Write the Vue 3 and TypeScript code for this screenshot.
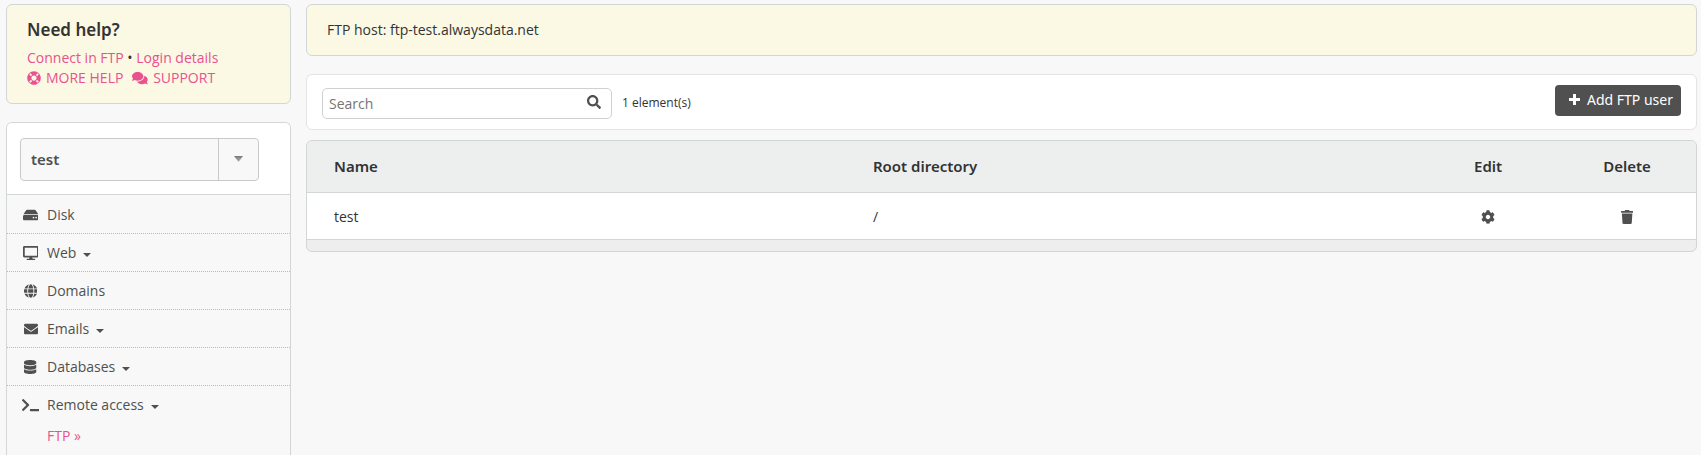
<script setup lang="ts">
import { ref } from 'vue'

interface Icon {
  box: string
  d: string
}

interface MenuEntry {
  label: string
  icon: Icon
  expandable: boolean
  children?: string[]
}

const icons: Record<string, Icon> = {
  disk: {
    box: '0 0 576 512',
    d: 'M576 304v96c0 26.51-21.49 48-48 48H48c-26.51 0-48-21.49-48-48v-96c0-26.51 21.49-48 48-48h480c26.51 0 48 21.49 48 48zm-48-80a79.557 79.557 0 0 1 30.777 6.165L462.25 85.374A48.003 48.003 0 0 0 422.311 64H153.689a48 48 0 0 0-39.938 21.374L17.223 230.165A79.557 79.557 0 0 1 48 224h480zm-48 96c-17.673 0-32 14.327-32 32s14.327 32 32 32 32-14.327 32-32-14.327-32-32-32zm-96 0c-17.673 0-32 14.327-32 32s14.327 32 32 32 32-14.327 32-32-14.327-32-32-32z',
  },
  desktop: {
    box: '0 0 576 512',
    d: 'M528 0H48C21.5 0 0 21.5 0 48v320c0 26.5 21.5 48 48 48h192l-16 48h-72c-13.3 0-24 10.7-24 24s10.7 24 24 24h272c13.3 0 24-10.7 24-24s-10.7-24-24-24h-72l-16-48h192c26.5 0 48-21.5 48-48V48c0-26.5-21.5-48-48-48zm-16 352H64V64h448v288z',
  },
  globe: {
    box: '0 0 496 512',
    d: 'M336.5 160C322 70.7 287.8 8 248 8s-74 62.7-88.5 152h177zM152 256c0 22.2 1.2 43.5 3.3 64h185.3c2.1-20.5 3.3-41.8 3.3-64s-1.2-43.5-3.3-64H155.3c-2.1 20.5-3.3 41.8-3.3 64zm324.7-96c-28.6-67.9-86.5-120.4-158-141.6 24.4 33.8 41.2 84.7 50 141.6h108zM177.2 18.4C105.8 39.6 47.8 92.1 19.3 160h108c8.7-56.9 25.5-107.8 49.9-141.6zM487.4 192H372.7c2.1 21 3.3 42.5 3.3 64s-1.2 43-3.3 64h114.6c5.5-20.5 8.6-41.8 8.6-64s-3.1-43.5-8.5-64zM120 256c0-21.5 1.2-43 3.3-64H8.6C3.2 212.5 0 233.8 0 256s3.2 43.5 8.6 64h114.6c-2-21-3.2-42.5-3.2-64zm39.5 96c14.5 89.3 48.7 152 88.5 152s74-62.7 88.5-152h-177zm159.3 141.6c71.4-21.2 129.4-73.7 158-141.6h-108c-8.8 56.9-25.6 107.8-50 141.6zM19.3 352c28.6 67.9 86.5 120.4 158 141.6-24.4-33.8-41.2-84.7-50-141.6h-108z',
  },
  envelope: {
    box: '0 0 512 512',
    d: 'M502.3 190.8c3.9-3.1 9.7-.2 9.7 4.7V400c0 26.5-21.5 48-48 48H48c-26.5 0-48-21.5-48-48V195.6c0-5 5.7-7.8 9.7-4.7 22.4 17.4 52.1 39.5 154.1 113.6 21.1 15.4 56.7 47.8 92.2 47.6 35.7.3 72-32.8 92.3-47.6 102-74.1 131.6-96.3 154-113.7zM256 320c23.2.4 56.6-29.2 73.4-41.4 132.7-96.3 142.8-104.7 173.4-128.7 5.8-4.5 9.2-11.5 9.2-18.9v-19c0-26.5-21.5-48-48-48H48c-26.5 0-48 21.5-48 48v19c0 7.4 3.4 14.3 9.2 18.9 30.6 23.9 40.7 32.4 173.4 128.7 16.8 12.2 50.2 41.8 73.4 41.4z',
  },
  database: {
    box: '0 0 448 512',
    d: 'M448 73.143v45.714C448 159.143 347.667 192 224 192S0 159.143 0 118.857V73.143C0 32.857 100.333 0 224 0s224 32.857 224 73.143zM448 176v102.857C448 319.143 347.667 352 224 352S0 319.143 0 278.857V176c48.125 33.143 136.208 48.572 224 48.572S399.874 209.143 448 176zm0 160v102.857C448 479.143 347.667 512 224 512S0 479.143 0 438.857V336c48.125 33.143 136.208 48.572 224 48.572S399.874 369.143 448 336z',
  },
  terminal: {
    box: '0 0 640 512',
    d: 'M257.981 272.971L63.638 467.314c-9.373 9.373-24.569 9.373-33.941 0L7.029 444.647c-9.357-9.357-9.375-24.522-.04-33.901L161.011 256 6.99 101.255c-9.335-9.379-9.317-24.544.04-33.901l22.667-22.667c9.373-9.373 24.569-9.373 33.941 0L257.981 239.03c9.373 9.372 9.373 24.568 0 33.941zM640 456v-32c0-13.255-10.745-24-24-24H312c-13.255 0-24 10.745-24 24v32c0 13.255 10.745 24 24 24h304c13.255 0 24-10.745 24-24z',
  },
  lifeRing: {
    box: '0 0 512 512',
    d: 'M256 8C119.033 8 8 119.033 8 256s111.033 248 248 248 248-111.033 248-248S392.967 8 256 8zm173.696 119.559l-63.399 63.399c-10.987-18.559-26.67-34.252-45.255-45.255l63.399-63.399a218.396 218.396 0 0 1 45.255 45.255zM256 352c-53.019 0-96-42.981-96-96s42.981-96 96-96 96 42.981 96 96-42.981 96-96 96zM127.559 82.304l63.399 63.399c-18.559 10.987-34.252 26.67-45.255 45.255l-63.399-63.399a218.372 218.372 0 0 1 45.255-45.255zM82.304 384.441l63.399-63.399c10.987 18.559 26.67 34.252 45.255 45.255l-63.399 63.399a218.396 218.396 0 0 1-45.255-45.255zm302.137 45.255l-63.399-63.399c18.559-10.987 34.252-26.67 45.255-45.255l63.399 63.399a218.403 218.403 0 0 1-45.255 45.255z',
  },
  comments: {
    box: '0 0 576 512',
    d: 'M416 192c0-88.4-93.1-160-208-160S0 103.6 0 192c0 34.3 14.1 65.9 38 92-13.4 30.2-35.5 54.2-35.8 54.5-2.2 2.3-2.8 5.7-1.5 8.7S4.8 352 8 352c36.6 0 66.9-12.3 88.7-25 32.2 15.7 70.3 25 111.3 25 114.9 0 208-71.6 208-160zm122 220c23.9-26 38-57.7 38-92 0-66.9-53.5-124.2-129.3-148.1.9 6.6 1.3 13.3 1.3 20.1 0 105.9-107.7 192-240 192-10.8 0-21.3-.8-31.7-1.9C207.8 439.6 281.8 480 368 480c41 0 79.1-9.2 111.3-25 21.8 12.7 52.1 25 88.7 25 3.2 0 6.1-1.9 7.3-4.8 1.3-2.9.7-6.3-1.5-8.7-.3-.3-22.4-24.2-35.8-54.5z',
  },
  search: {
    box: '0 0 512 512',
    d: 'M505 442.7L405.3 343c-4.5-4.5-10.6-7-17-7H372c27.6-35.3 44-79.7 44-128C416 93.1 322.9 0 208 0S0 93.1 0 208s93.1 208 208 208c48.3 0 92.7-16.4 128-44v16.3c0 6.4 2.5 12.5 7 17l99.7 99.7c9.4 9.4 24.6 9.4 33.9 0l28.3-28.3c9.4-9.4 9.4-24.6.1-34zM208 336c-70.7 0-128-57.2-128-128 0-70.7 57.2-128 128-128 70.7 0 128 57.2 128 128 0 70.7-57.2 128-128 128z',
  },
  cog: {
    box: '0 0 512 512',
    d: 'M487.4 315.7l-42.6-24.6c4.3-23.2 4.3-47 0-70.2l42.6-24.6c4.9-2.8 7.1-8.6 5.5-14-11.1-35.6-30-67.8-54.7-94.6-3.8-4.1-10-5.1-14.8-2.3L380.8 110c-17.9-15.4-38.5-27.3-60.8-35.1V25.8c0-5.6-3.9-10.5-9.4-11.7-36.7-8.2-74.3-7.8-109.2 0-5.5 1.2-9.4 6.1-9.4 11.7V75c-22.2 7.9-42.8 19.8-60.8 35.1L88.7 85.5c-4.9-2.8-11-1.9-14.8 2.3-24.7 26.7-43.6 58.9-54.7 94.6-1.7 5.4.6 11.2 5.5 14L67.3 221c-4.3 23.2-4.3 47 0 70.2l-42.6 24.6c-4.9 2.8-7.1 8.6-5.5 14 11.1 35.6 30 67.8 54.7 94.6 3.8 4.1 10 5.1 14.8 2.3l42.6-24.6c17.9 15.4 38.5 27.3 60.8 35.1v49.2c0 5.6 3.9 10.5 9.4 11.7 36.7 8.2 74.3 7.8 109.2 0 5.5-1.2 9.4-6.1 9.4-11.7v-49.2c22.2-7.9 42.8-19.8 60.8-35.1l42.6 24.6c4.9 2.8 11 1.9 14.8-2.3 24.7-26.7 43.6-58.9 54.7-94.6 1.5-5.5-.7-11.3-5.6-14.1zM256 336c-44.1 0-80-35.9-80-80s35.9-80 80-80 80 35.9 80 80-35.9 80-80 80z',
  },
  trash: {
    box: '0 0 448 512',
    d: 'M432 32H312l-9.4-18.7A24 24 0 0 0 281.1 0H166.8a23.72 23.72 0 0 0-21.4 13.3L136 32H16A16 16 0 0 0 0 48v32a16 16 0 0 0 16 16h416a16 16 0 0 0 16-16V48a16 16 0 0 0-16-16zM53.2 467a48 48 0 0 0 47.9 45h245.8a48 48 0 0 0 47.9-45L416 128H32z',
  },
}

const menu: MenuEntry[] = [
  { label: 'Disk', icon: icons.disk, expandable: false },
  { label: 'Web', icon: icons.desktop, expandable: true },
  { label: 'Domains', icon: icons.globe, expandable: false },
  { label: 'Emails', icon: icons.envelope, expandable: true },
  { label: 'Databases', icon: icons.database, expandable: true },
  { label: 'Remote access', icon: icons.terminal, expandable: true, children: ['FTP »'] },
]

const users = [{ name: 'test', root: '/' }]
const account = ref('test')
const query = ref('')
</script>

<template>
  <div class="page">
    <aside class="sidebar">
      <section class="help">
        <h2>Need help?</h2>
        <p><a href="#">Connect in FTP</a> • <a href="#">Login details</a></p>
        <p class="help-actions">
          <a href="#"><svg class="icon" :viewBox="icons.lifeRing.box"><path :d="icons.lifeRing.d" /></svg>MORE HELP</a>
          <a href="#"><svg class="icon" :viewBox="icons.comments.box"><path :d="icons.comments.d" /></svg>SUPPORT</a>
        </p>
      </section>

      <nav class="nav">
        <div class="account">
          <div class="account-box">
            <select v-model="account" aria-label="Account">
              <option value="test">test</option>
            </select>
            <span class="account-arrow"></span>
          </div>
        </div>
        <ul class="menu">
          <li v-for="entry in menu" :key="entry.label">
            <a class="menu-link" href="#">
              <span class="menu-icon">
                <svg class="icon" :viewBox="entry.icon.box"><path :d="entry.icon.d" /></svg>
              </span>
              {{ entry.label }}
              <span v-if="entry.expandable" class="caret"></span>
            </a>
            <a v-for="child in entry.children" :key="child" class="submenu-link" href="#">{{ child }}</a>
          </li>
        </ul>
      </nav>
    </aside>

    <main class="content">
      <section class="notice">FTP host: ftp-test.alwaysdata.net</section>

      <section class="toolbar">
        <div class="filter">
          <div class="search">
            <input v-model="query" type="text" placeholder="Search" aria-label="Search" />
            <button type="button" aria-label="Run search">
              <svg class="icon" :viewBox="icons.search.box"><path :d="icons.search.d" /></svg>
            </button>
          </div>
          <span class="count">{{ users.length }} element(s)</span>
        </div>
        <button class="add" type="button">
          <svg class="plus" viewBox="0 0 11 11"><path d="M4 0h3v4h4v3H7v4H4V7H0V4h4z" /></svg>Add FTP user
        </button>
      </section>

      <div class="panel">
        <table>
          <thead>
            <tr>
              <th class="col-name">Name</th>
              <th>Root directory</th>
              <th class="col-action">Edit</th>
              <th class="col-action">Delete</th>
            </tr>
          </thead>
          <tbody>
            <tr v-for="user in users" :key="user.name">
              <td>{{ user.name }}</td>
              <td>{{ user.root }}</td>
              <td class="col-action">
                <a href="#" aria-label="Edit"><svg class="icon" :viewBox="icons.cog.box"><path :d="icons.cog.d" /></svg></a>
              </td>
              <td class="col-action">
                <a href="#" aria-label="Delete"><svg class="icon" :viewBox="icons.trash.box"><path :d="icons.trash.d" /></svg></a>
              </td>
            </tr>
          </tbody>
        </table>
      </div>
    </main>
  </div>
</template>

<style>
html {
  background: #f8f8f8;
}

body {
  margin: 0;
  overflow: hidden;
}
</style>

<style scoped>
* {
  box-sizing: border-box;
}

.page {
  display: grid;
  grid-template-columns: 285px minmax(0, 1fr);
  gap: 15px;
  min-height: 100vh;
  padding: 4px 4px 0 6px;
  color: #333;
  font: 14px/20px "Open Sans", "Noto Sans", sans-serif;
}

a {
  color: #e9528e;
  text-decoration: none;
}

button,
input,
select {
  margin: 0;
  font: inherit;
  color: inherit;
}

.icon {
  display: block;
  height: 14px;
  fill: currentColor;
}

.sidebar {
  display: flex;
  flex-direction: column;
  gap: 18px;
}

.help,
.notice {
  border: 1px solid #d3d6d6;
  border-radius: 6px;
  background: #fbf8e4;
}

.help {
  padding: 14px 20px 15px;
}

.help h2 {
  margin: 0 0 7px;
  font: 600 17px/22px "Noto Sans", sans-serif;
}

.help p {
  margin: 0;
}

.help .help-actions {
  display: flex;
  gap: 9px;
}

.help-actions a {
  display: flex;
  align-items: center;
  gap: 5px;
}

.nav {
  flex: 1;
  border: 1px solid #d3d6d6;
  border-bottom: 0;
  border-radius: 6px 6px 0 0;
  overflow: hidden;
}

.account {
  padding: 15px 31px 13px 13px;
  border-bottom: 1px solid #d3d6d6;
  background: #fff;
}

.account-box {
  display: flex;
  position: relative;
}

.account select {
  flex: 1;
  height: 43px;
  padding: 0 50px 2px 10px;
  border: 1px solid #c8caca;
  border-radius: 4px;
  appearance: none;
  background: #f8f8f8;
  color: #505050;
  font: 600 15px/20px "Noto Sans", sans-serif;
}

.account-arrow {
  position: absolute;
  top: 0;
  right: 0;
  bottom: 0;
  width: 41px;
  border-left: 1px solid #c8caca;
  pointer-events: none;
}

.account-arrow::after {
  content: "";
  display: block;
  width: 9px;
  height: 6px;
  margin: 18px 0 0 15px;
  background: linear-gradient(#77777c, #b8b8bc);
  clip-path: polygon(0 0, 100% 0, 50% 100%);
}

.menu {
  margin: 0;
  padding: 1px 0 0;
  list-style: none;
}

.menu li + li {
  border-top: 1px dotted #b8b8b8;
}

.menu-link {
  display: flex;
  align-items: center;
  height: 37px;
  padding-left: 14px;
  gap: 7px;
  color: #505050;
}

.menu-icon {
  display: flex;
  justify-content: center;
  width: 19px;
}

.caret {
  margin-top: 4px;
  border-top: 4px solid #505050;
  border-right: 4px solid transparent;
  border-left: 4px solid transparent;
}

.submenu-link {
  display: block;
  padding: 3px 0 16px 40px;
}

.notice {
  padding: 15px 20px;
}

.toolbar {
  display: flex;
  justify-content: space-between;
  margin: 18px 0 10px;
  padding: 10px 15px;
  border: 1px solid #e3e4e4;
  border-radius: 6px;
  background: #fff;
}

.filter {
  display: flex;
  align-items: center;
  gap: 10px;
  padding-top: 3px;
}

.search {
  display: flex;
  align-items: center;
  width: 290px;
  height: 31px;
  border: 1px solid #d0d0d0;
  border-radius: 5px;
  overflow: hidden;
}

.search input {
  flex: 1;
  min-width: 0;
  height: 29px;
  padding: 0 6px;
  border: 0;
  outline: 0;
  background: none;
}

.search input::placeholder {
  color: #757575;
  opacity: 1;
}

.search button {
  display: flex;
  align-items: center;
  height: 29px;
  padding: 0 10px 3px;
  border: 0;
  background: none;
  color: #505050;
}

.count {
  padding-bottom: 2px;
  font-size: 12px;
}

.add {
  display: flex;
  align-items: center;
  gap: 7px;
  height: 31px;
  padding: 0 8px 2px 14px;
  border: 0;
  border-radius: 4px;
  background: #505050;
  color: #fff;
  font-family: "Noto Sans", sans-serif;
}

.plus {
  width: 11px;
  height: 11px;
  fill: currentColor;
}

.panel {
  padding-bottom: 11px;
  border: 1px solid #d3d6d6;
  border-radius: 6px;
  overflow: hidden;
  background: #eee;
}

table {
  width: 100%;
  border-collapse: separate;
  border-spacing: 0;
  table-layout: fixed;
}

th,
td {
  padding: 0 27px;
  border-bottom: 1px solid #d3d6d6;
  text-align: left;
}

th {
  height: 52px;
  padding-bottom: 2px;
  background: #edefee;
  font: 600 15px/20px "Noto Sans", sans-serif;
}

td {
  height: 47px;
  padding-top: 2px;
  background: #fff;
}

.col-name {
  width: 38.8%;
}

.col-action {
  width: 10%;
  padding-right: 0;
  padding-left: 1px;
  text-align: center;
}

td.col-action {
  padding-top: 0;
}

td a {
  display: inline-flex;
  vertical-align: middle;
  color: #505050;
}
</style>
